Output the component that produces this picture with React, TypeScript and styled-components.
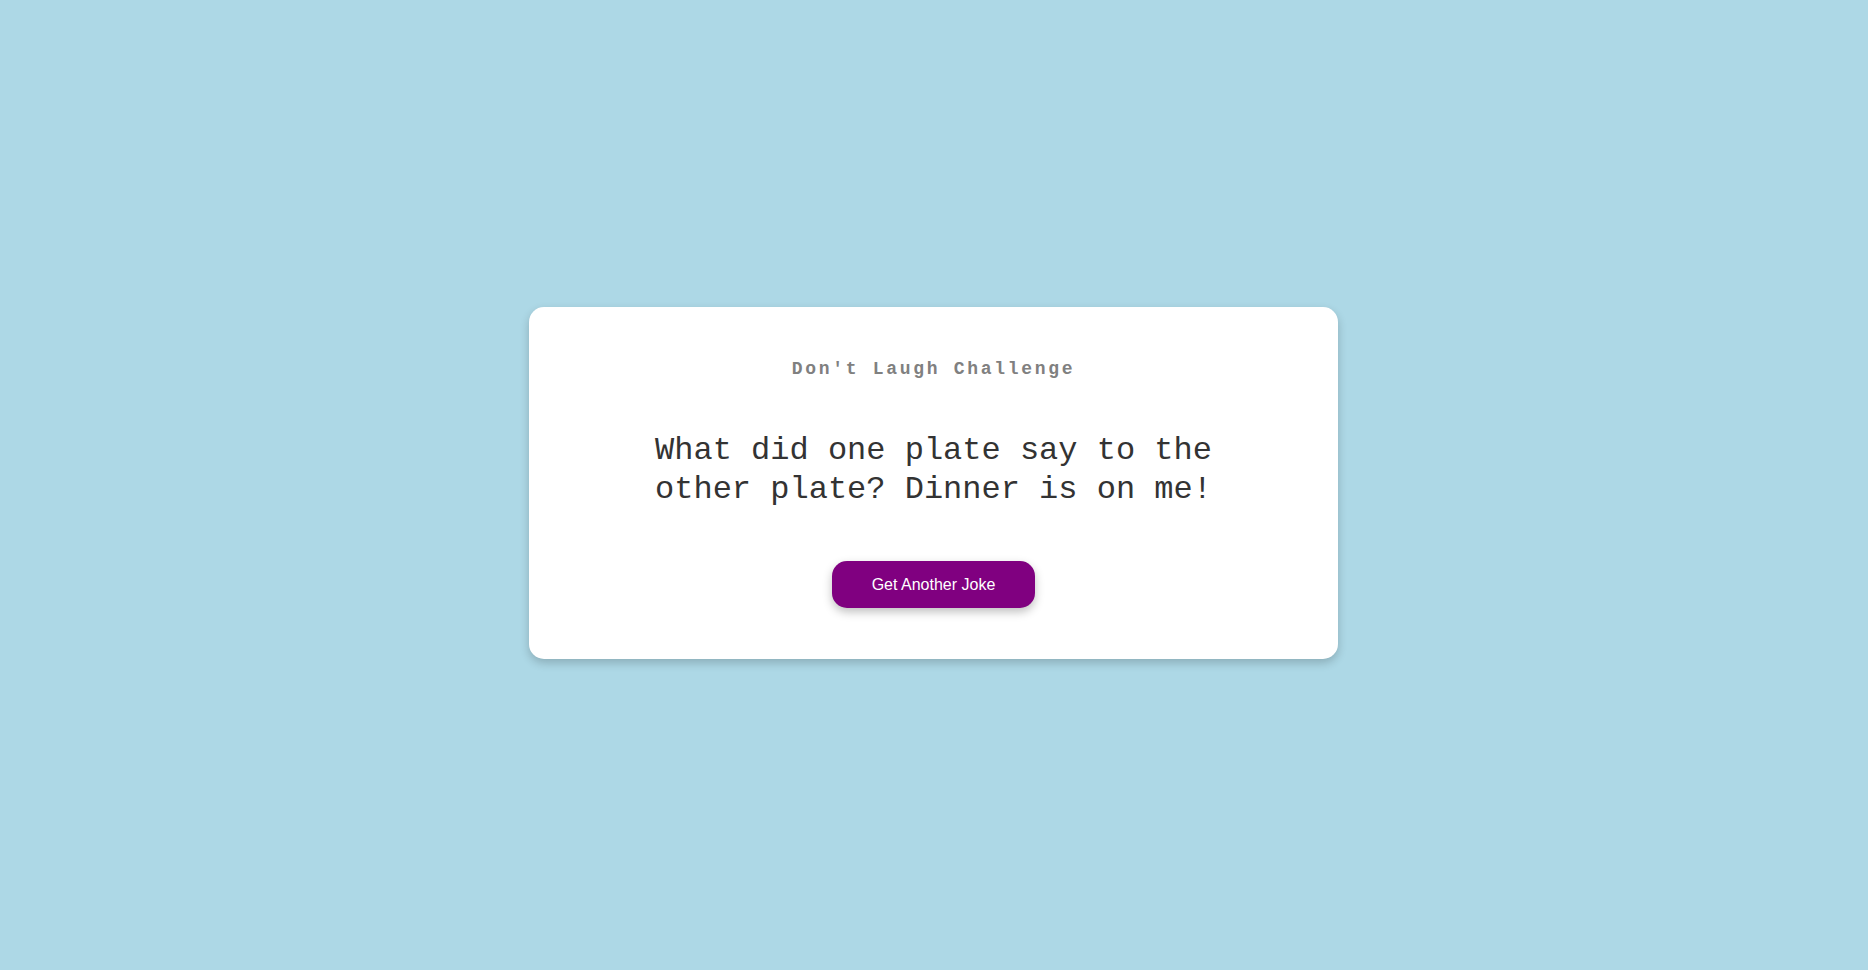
import React from "react";
import styled, { createGlobalStyle } from "styled-components";

const GlobalStyle = createGlobalStyle`
  html, body {
    margin: 0;
    padding: 0;
  }
  body {
    background: #add8e6;
    font-family: "Liberation Mono", "Courier New", monospace;
  }
`;

const Page = styled.main`
  min-height: 100vh;
  box-sizing: border-box;
  padding-bottom: 5px;
  padding-right: 1px;
  display: flex;
  align-items: center;
  justify-content: center;
`;

const Card = styled.section`
  width: 809px;
  box-sizing: border-box;
  background: #ffffff;
  border-radius: 15px;
  box-shadow: 0 4px 10px rgba(0, 0, 0, 0.2);
  padding: 52px 20px 51px;
  display: flex;
  flex-direction: column;
  align-items: center;
  text-align: center;
`;

const Title = styled.h1`
  margin: 0 0 52px;
  font-family: "Liberation Mono", "Courier New", monospace;
  font-size: 18px;
  line-height: normal;
  font-weight: bold;
  letter-spacing: 2.7px;
  color: #808080;
`;

const Joke = styled.p`
  margin: 0 0 51px;
  max-width: 600px;
  font-family: "Liberation Mono", "Courier New", monospace;
  font-size: 32px;
  line-height: 39.5px;
  color: #333333;
`;

const Button = styled.button`
  border: none;
  cursor: pointer;
  background: #800080;
  color: #ffffff;
  font-family: "Liberation Sans", Arial, sans-serif;
  font-size: 16px;
  line-height: 19px;
  padding: 14px 40px;
  border-radius: 15px;
  box-shadow: 0 4px 10px rgba(0, 0, 0, 0.25);
`;

export default function App() {
  return (
    <>
      <GlobalStyle />
      <Page>
        <Card>
          <Title>Don't Laugh Challenge</Title>
          <Joke>What did one plate say to the other plate? Dinner is on me!</Joke>
          <Button type="button">Get Another Joke</Button>
        </Card>
      </Page>
    </>
  );
}
